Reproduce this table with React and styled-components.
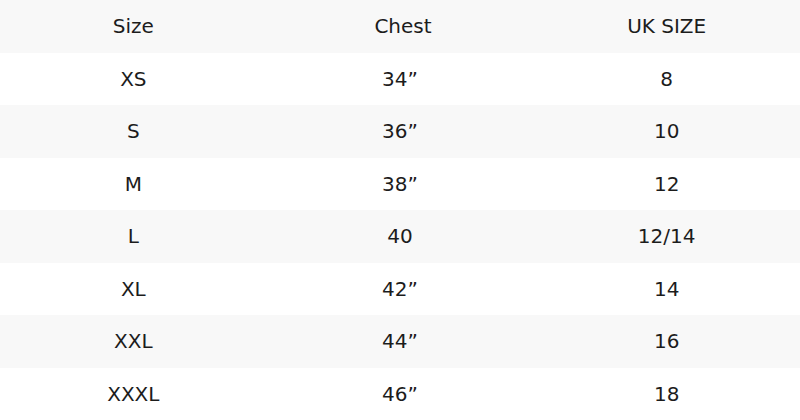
import React from "react";
import styled, { createGlobalStyle } from "styled-components";

const Global = createGlobalStyle`
  html, body { margin: 0; padding: 0; background: #fff; }
  body { font-family: "DejaVu Sans", sans-serif; }
`;

const Table = styled.table`
  width: 800px;
  border-collapse: collapse;
  table-layout: fixed;
  font-family: "DejaVu Sans", sans-serif;
  font-size: 20px;
  color: #1c1c1c;
`;

const Row = styled.tr`
  height: 52.5px;
  background: ${(p) => (p.$shaded ? "#f8f8f8" : "#ffffff")};
`;

const HeadCell = styled.th`
  font-weight: normal;
  text-align: center;
  vertical-align: middle;
  padding: 0 0 0 ${(p) => p.$indent || 0}px;
`;

const Cell = styled.td`
  text-align: center;
  vertical-align: middle;
  padding: 0;
`;

const rows = [
  ["XS", "34”", "8"],
  ["S", "36”", "10"],
  ["M", "38”", "12"],
  ["L", "40", "12/14"],
  ["XL", "42”", "14"],
  ["XXL", "44”", "16"],
  ["XXXL", "46”", "18"],
];

export default function App() {
  return (
    <>
      <Global />
      <Table>
        <thead>
          <Row $shaded>
            <HeadCell>Size</HeadCell>
            <HeadCell $indent={6}>Chest</HeadCell>
            <HeadCell>UK SIZE</HeadCell>
          </Row>
        </thead>
        <tbody>
          {rows.map((r, i) => (
            <Row key={r[0]} $shaded={i % 2 === 1}>
              {r.map((c, j) => (
                <Cell key={j}>{c}</Cell>
              ))}
            </Row>
          ))}
        </tbody>
      </Table>
    </>
  );
}
